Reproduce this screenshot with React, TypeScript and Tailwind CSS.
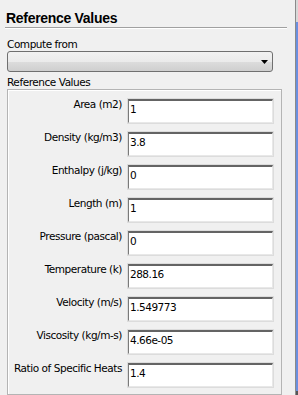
import React from "react";

const rows: [string, string][] = [
  ["Area (m2)", "1"],
  ["Density (kg/m3)", "3.8"],
  ["Enthalpy (j/kg)", "0"],
  ["Length (m)", "1"],
  ["Pressure (pascal)", "0"],
  ["Temperature (k)", "288.16"],
  ["Velocity (m/s)", "1.549773"],
  ["Viscosity (kg/m-s)", "4.66e-05"],
  ["Ratio of Specific Heats", "1.4"],
];

const ui = { fontFamily: '"DejaVu Sans", Verdana, sans-serif' };

export default function App() {
  return (
    <div
      className="w-[298px] h-[395px] bg-[#f0f0f0] flex overflow-hidden text-[#000]"
      style={{ fontFamily: '"Liberation Sans", Arial, sans-serif' }}
    >
      <div className="w-[295px] flex flex-col">
        <div className="pl-[6px] pt-[10px] text-[14px] font-bold leading-[16px] tracking-[-0.3px] text-black">
          Reference Values
        </div>
        <div className="mt-[1px] ml-[5px] w-[282px] h-px bg-[#a0a0a0]" />
        <div className="ml-[5px] w-[282px] h-px bg-white" />
        <div
          className="mt-[9px] pl-[7px] text-[10.5px] leading-[13px] tracking-[-0.45px]"
          style={ui}
        >
          Compute from
        </div>
        <div className="ml-[7px] w-[266px] h-[21px] rounded-[3px] border border-[#707070] bg-[linear-gradient(#f2f2f2_0%,#ebebeb_50%,#dddddd_50%,#cfcfcf_100%)] flex items-center justify-end pr-[4px]">
          <svg width="7" height="4" viewBox="0 0 7 4">
            <polygon points="0,0 7,0 3.5,4" fill="#000" />
          </svg>
        </div>
        <div
          className="mt-[4px] pl-[7px] text-[10.5px] leading-[13px] tracking-[-0.45px]"
          style={ui}
        >
          Reference Values
        </div>
        <div className="ml-[7px] w-[275px] flex-1 border border-[#b4b4b4] shadow-[inset_1px_1px_0_#ffffff] pt-[8px] flex flex-col gap-[7px]">
          {rows.map(([label, value]) => (
            <div key={label} className="flex items-start">
              <div
                className="w-[114px] text-right text-[10.5px] leading-[13px] tracking-[-0.45px] whitespace-nowrap"
                style={ui}
              >
                {label}
              </div>
              <div className="ml-[5px] w-[147px] h-[26px] border border-[#dcdcdc]">
                <div
                  className="w-full h-full bg-white border-t-2 border-l border-t-[#646464] border-l-[#7a7a7a] border-r border-b border-r-[#e8e8e8] border-b-[#e8e8e8] pl-[1px] pt-[2px] text-[10.5px] leading-[13px] tracking-[-0.5px]"
                  style={ui}
                >
                  {value}
                </div>
              </div>
            </div>
          ))}
        </div>
      </div>
      <div className="w-px h-full bg-[#8a8a8a]" />
      <div className="w-[2px] h-full flex flex-col">
        <div className="h-[22px] bg-[#d8d8d8]" />
        <div className="flex-1 bg-[#6b8fdf]" />
        <div className="h-[4px] bg-[#555]" />
      </div>
    </div>
  );
}
